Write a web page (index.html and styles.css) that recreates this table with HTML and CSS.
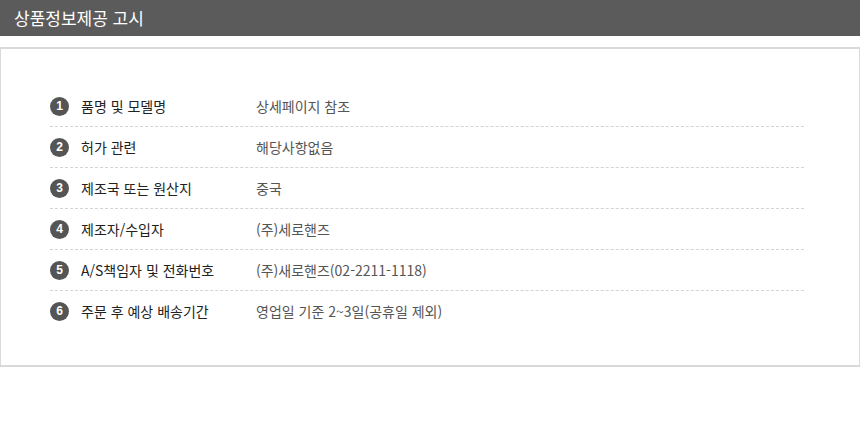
FILE: index.html
```html
<!DOCTYPE html>
<html lang="ko">
<head>
<meta charset="utf-8">
<link rel="stylesheet" href="styles.css">
</head>
<body>
<div class="page">
  <h1 class="title">상품정보제공 고시</h1>
  <div class="box">
    <ul class="list">
      <li class="row"><span class="num">1</span><span class="label">품명 및 모델명</span><span class="value">상세페이지 참조</span></li>
      <li class="row"><span class="num">2</span><span class="label">허가 관련</span><span class="value">해당사항없음</span></li>
      <li class="row"><span class="num">3</span><span class="label">제조국 또는 원산지</span><span class="value">중국</span></li>
      <li class="row"><span class="num">4</span><span class="label">제조자/수입자</span><span class="value">(주)세로핸즈</span></li>
      <li class="row"><span class="num">5</span><span class="label">A/S책임자 및 전화번호</span><span class="value">(주)새로핸즈(02-2211-1118)</span></li>
      <li class="row"><span class="num">6</span><span class="label">주문 후 예상 배송기간</span><span class="value">영업일 기준 2~3일(공휴일 제외)</span></li>
    </ul>
  </div>
</div>
</body>
</html>
```

FILE: styles.css
```css
html, body {
  margin: 0;
  padding: 0;
  background: #fff;
}
body {
  font-family: "Noto Sans CJK KR", "Noto Sans", sans-serif;
  width: 860px;
}
.title {
  margin: 0;
  height: 36px;
  background: #5b5b5b;
  color: #fff;
  font-size: 17px;
  font-weight: 400;
  line-height: 36px;
  padding-left: 14px;
}
.box {
  margin-top: 11px;
  border: 1px solid #d9d9d9;
  border-width: 2px 1px 2px 1px;
  height: 316px;
  box-sizing: content-box;
  width: 858px;
}
.list {
  list-style: none;
  margin: 0;
  padding: 37px 55px 0 49px;
}
.row {
  display: flex;
  align-items: center;
  height: 40px;
  border-bottom: 1px dashed #d4d4d4;
  font-size: 14px;
}
.row:last-child {
  border-bottom: none;
}
.num {
  width: 19px;
  height: 19px;
  border-radius: 50%;
  background: #555;
  color: #fff;
  font-size: 12px;
  font-weight: 700;
  display: flex;
  align-items: center;
  justify-content: center;
  flex: none;
  font-family: "Liberation Sans", sans-serif;
}
.label {
  margin-left: 12px;
  width: 175px;
  color: #222;
  flex: none;
}
.value {
  color: #555;
}
```
